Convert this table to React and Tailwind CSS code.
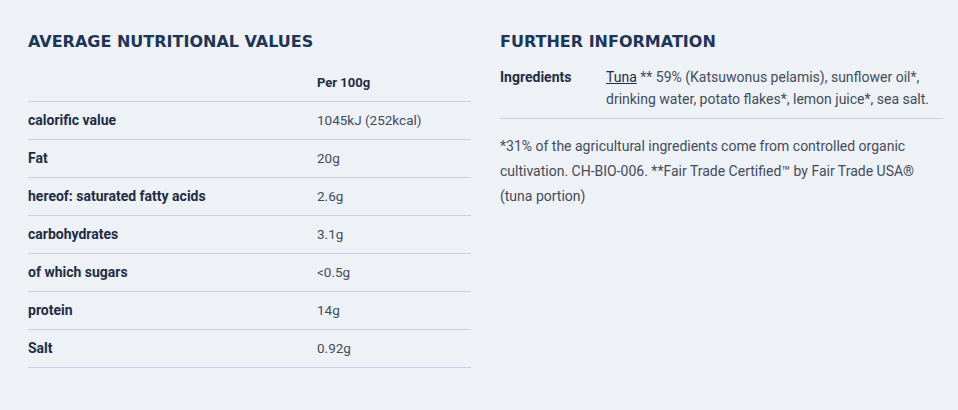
import React from 'react';

const rows = [
  ['calorific value', '1045kJ (252kcal)'],
  ['Fat', '20g'],
  ['hereof: saturated fatty acids', '2.6g'],
  ['carbohydrates', '3.1g'],
  ['of which sugars', '<0.5g'],
  ['protein', '14g'],
  ['Salt', '0.92g'],
];

const App = () => {
  return (
    <div className="min-h-[410px] bg-[#eef1f5] pt-[32px] pl-[28px] pr-[15px] font-['Roboto',sans-serif]">
      <div className="flex gap-[29px]">
        {/* Nutrition table */}
        <div className="w-[443px]">
          <h2 className="font-['DejaVu_Sans',sans-serif] text-[16px] leading-[20px] font-bold uppercase text-[#1e3656]">
            Average nutritional values
          </h2>
          <div className="mt-[12px]">
            <div className="flex h-[38px] items-center border-b border-[#c3d2e4]">
              <div className="w-[289px]" />
              <div className="text-[13px] font-bold text-[#1f2d44]">Per 100g</div>
            </div>
            {rows.map(([label, value]) => (
              <div key={label} className="flex h-[38px] items-center border-b border-[#c3d2e4]">
                <div className="w-[289px] text-[14px] font-bold text-[#1f2d44]">{label}</div>
                <div className="text-[13.5px] text-[#434c5b]">{value}</div>
              </div>
            ))}
          </div>
        </div>

        {/* Further information */}
        <div className="w-[443px]">
          <h2 className="font-['DejaVu_Sans',sans-serif] text-[16px] leading-[20px] font-bold uppercase text-[#1e3656]">
            Further information
          </h2>
          <div className="mt-[14px] flex border-b border-[#c3d2e4] pb-[8px]">
            <div className="w-[106px] shrink-0 text-[14px] leading-[22px] font-bold text-[#1f2d44]">Ingredients</div>
            <p className="text-[14px] leading-[22px] text-[#434c5b]">
              <span className="text-[#1f2d44] underline">Tuna</span> ** 59% (Katsuwonus pelamis), sunflower oil*,
              drinking water, potato flakes*, lemon juice*, sea salt.
            </p>
          </div>
          <p className="mt-[15px] text-[14px] leading-[25px] text-[#434c5b]">
            *31% of the agricultural ingredients come from controlled organic cultivation. CH-BIO-006. **Fair Trade
            Certified™ by Fair Trade USA® (tuna portion)
          </p>
        </div>
      </div>
    </div>
  );
};

export default App;
